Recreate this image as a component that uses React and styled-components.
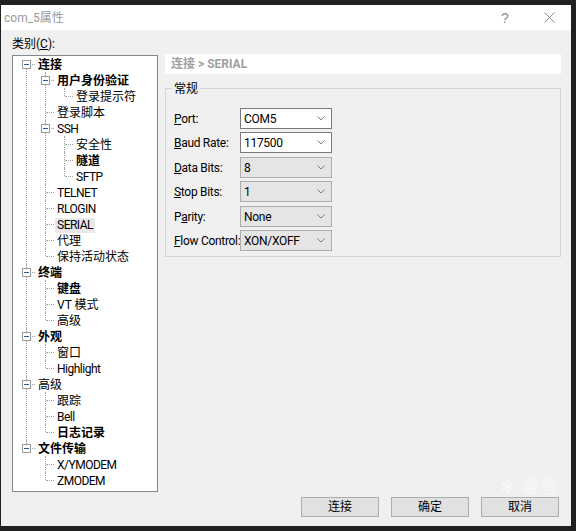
import { Fragment } from "react";
import styled, { createGlobalStyle } from "styled-components";

const GlobalStyle = createGlobalStyle`
  html, body {
    margin: 0;
    padding: 0;
    background: #202020;
  }
  body {
    font-family: Roboto, "Noto Sans CJK SC", "Microsoft YaHei", sans-serif;
    font-size: 12px;
    color: #000;
  }
`;

const tree = [
  {
    label: "连接",
    bold: true,
    children: [
      { label: "用户身份验证", bold: true, children: [{ label: "登录提示符" }] },
      { label: "登录脚本" },
      {
        label: "SSH",
        children: [{ label: "安全性" }, { label: "隧道", bold: true }, { label: "SFTP" }],
      },
      { label: "TELNET" },
      { label: "RLOGIN" },
      { label: "SERIAL", selected: true },
      { label: "代理" },
      { label: "保持活动状态" },
    ],
  },
  {
    label: "终端",
    bold: true,
    children: [{ label: "键盘", bold: true }, { label: "VT 模式" }, { label: "高级" }],
  },
  { label: "外观", bold: true, children: [{ label: "窗口" }, { label: "Highlight" }] },
  {
    label: "高级",
    children: [{ label: "跟踪" }, { label: "Bell" }, { label: "日志记录", bold: true }],
  },
  {
    label: "文件传输",
    bold: true,
    children: [{ label: "X/YMODEM" }, { label: "ZMODEM" }],
  },
];

const fields = [
  { key: "P", rest: "ort:", value: "COM5", editable: true },
  { key: "B", rest: "aud Rate:", value: "117500", editable: true },
  { key: "D", rest: "ata Bits:", value: "8" },
  { key: "S", rest: "top Bits:", value: "1" },
  { pre: "P", key: "a", rest: "rity:", value: "None" },
  { key: "F", rest: "low Control:", value: "XON/XOFF" },
];

const isLatin = (text) => /^[\x20-\x7e]+$/.test(text);

const Window = styled.div`
  position: relative;
  display: flex;
  flex-direction: column;
  width: 570px;
  height: 521px;
  margin: 5px 0 0 1px;
  background: #f0f0f0;
`;

const TitleBar = styled.div`
  display: flex;
  align-items: center;
  height: 25px;
  padding: 0 16px 0 3px;
  background: #fff;
  color: #9a9a9a;
  font-size: 12px;
`;

const Title = styled.span`
  flex: 1;
  padding-top: 2px;
  line-height: 23px;
`;

const HelpButton = styled.span`
  width: 14px;
  margin-right: 32px;
  color: #8c8c8c;
  font-family: "Liberation Sans", sans-serif;
  font-size: 14px;
  text-align: center;
`;

const Body = styled.div`
  display: flex;
  gap: 7px;
  padding: 0 0 0 11px;
`;

const LeftColumn = styled.div`
  display: flex;
  flex-direction: column;
`;

const CategoryLabel = styled.div`
  height: 25px;
  padding-top: 3px;
  box-sizing: border-box;
  line-height: 22px;
  u {
    text-decoration: underline;
  }
`;

const TreeBox = styled.div`
  width: 146px;
  height: 437px;
  box-sizing: border-box;
  border: 1px solid #828790;
  background: #fff;
  overflow: hidden;
`;

const TreeList = styled.ul`
  margin: 0;
  padding: 0;
  list-style: none;
`;

const TreeItem = styled.li`
  position: relative;

  &::before {
    content: "";
    position: absolute;
    left: ${(p) => 13 + 19 * p.$level}px;
    top: ${(p) => (p.$first ? 8 : 0)}px;
    height: ${(p) =>
      p.$last ? (p.$first ? "0px" : "8px") : p.$first ? "calc(100% - 8px)" : "100%"};
    border-left: 1px dotted #a0a0a0;
  }
`;

const TreeRow = styled.div`
  position: relative;
  display: flex;
  align-items: center;
  height: 16px;
  padding-left: ${(p) => 23 + 19 * p.$level}px;

  &::before {
    content: "";
    position: absolute;
    left: ${(p) => 14 + 19 * p.$level}px;
    top: 8px;
    width: 8px;
    border-top: 1px dotted #a0a0a0;
  }
`;

const Expander = styled.span`
  position: absolute;
  z-index: 1;
  left: ${(p) => 9 + 19 * p.$level}px;
  top: 4px;
  width: 9px;
  height: 9px;
  box-sizing: border-box;
  border: 1px solid #9a9a9a;
  background: #fff;

  &::after {
    content: "";
    position: absolute;
    left: 1px;
    top: 3px;
    width: 5px;
    height: 1px;
    background: #2b55a8;
  }
`;

const TreeLabel = styled.span`
  position: relative;
  z-index: 1;
  margin-top: 2px;
  padding: 0 2px;
  line-height: 15px;
  font-weight: ${(p) => (p.$bold ? 700 : 400)};
  letter-spacing: ${(p) => (p.$latin ? "-0.5px" : "0")};
  background: ${(p) => (p.$selected ? "#e8e8e8" : "transparent")};
  white-space: nowrap;
`;

const RightColumn = styled.div`
  display: flex;
  flex-direction: column;
  padding-top: 24px;
`;

const Breadcrumb = styled.div`
  width: 396px;
  height: 20px;
  padding: 1px 0 0 6px;
  box-sizing: border-box;
  background: #fff;
  color: #a0a0a0;
  font-weight: 700;
  line-height: 19px;
`;

const GroupBox = styled.div`
  position: relative;
  width: 396px;
  height: 169px;
  margin-top: 14px;
  box-sizing: border-box;
  border: 1px solid #d5d5d5;
  padding: 19px 0 0 8px;
`;

const GroupTitle = styled.span`
  position: absolute;
  left: 6px;
  top: -8px;
  padding: 0 2px;
  background: #f0f0f0;
  line-height: 16px;
`;

const FormGrid = styled.div`
  display: grid;
  grid-template-columns: 66px 92px;
  grid-auto-rows: 21px;
  row-gap: 3.4px;
  align-items: center;
  letter-spacing: -0.3px;
`;

const FieldLabel = styled.label`
  padding-top: 2px;
  line-height: 19px;
  white-space: nowrap;
  u {
    text-decoration: underline;
  }
`;

const Combo = styled.div`
  display: flex;
  align-items: center;
  height: 21px;
  box-sizing: border-box;
  padding: 0 6px 0 3px;
  border: 1px solid ${(p) => (p.$editable ? "#7a7a7a" : "#adadad")};
  background: ${(p) => (p.$editable ? "#fff" : "#e5e5e5")};
`;

const ComboValue = styled.span`
  flex: 1;
  padding-top: 1px;
  line-height: 18px;
`;

const Footer = styled.div`
  display: flex;
  justify-content: flex-end;
  gap: 12px;
  margin-top: 5px;
  padding-right: 12px;
`;

const Button = styled.button`
  width: 78px;
  height: 20px;
  padding: 1px 0 0;
  border: 1px solid #adadad;
  background: #e1e1e1;
  color: #000;
  font-family: inherit;
  font-size: 12px;
  line-height: 17px;
`;

const Watermark = styled.span`
  position: absolute;
  right: 12px;
  bottom: 30px;
  color: rgba(255, 255, 255, 0.5);
  font-size: 18px;
  line-height: 18px;
  letter-spacing: 1px;
  pointer-events: none;
`;

const Chevron = () => (
  <svg width="8" height="5" viewBox="0 0 8 5">
    <polyline points="0.5,0.5 4,4 7.5,0.5" fill="none" stroke="#7a7a7a" strokeWidth="1" />
  </svg>
);

const CloseIcon = () => (
  <svg width="11" height="11" viewBox="0 0 11 11">
    <path d="M0.5 0.5 L10.5 10.5 M10.5 0.5 L0.5 10.5" stroke="#8c8c8c" strokeWidth="1" />
  </svg>
);

const TreeNode = ({ node, level, first, last }) => (
  <TreeItem $level={level} $first={first} $last={last}>
    <TreeRow $level={level}>
      {node.children && <Expander $level={level} />}
      <TreeLabel $bold={node.bold} $selected={node.selected} $latin={isLatin(node.label)}>
        {node.label}
      </TreeLabel>
    </TreeRow>
    {node.children && (
      <TreeList>
        {node.children.map((child, i) => (
          <TreeNode
            key={child.label + i}
            node={child}
            level={level + 1}
            first={false}
            last={i === node.children.length - 1}
          />
        ))}
      </TreeList>
    )}
  </TreeItem>
);

const App = () => {
  return (
    <>
      <GlobalStyle />
      <Window>
        <TitleBar>
          <Title>com_5属性</Title>
          <HelpButton>?</HelpButton>
          <CloseIcon />
        </TitleBar>
        <Body>
          <LeftColumn>
            <CategoryLabel>
              类别(<u>C</u>):
            </CategoryLabel>
            <TreeBox>
              <TreeList>
                {tree.map((node, i) => (
                  <TreeNode
                    key={node.label + i}
                    node={node}
                    level={0}
                    first={i === 0}
                    last={i === tree.length - 1}
                  />
                ))}
              </TreeList>
            </TreeBox>
          </LeftColumn>
          <RightColumn>
            <Breadcrumb>连接 &gt; SERIAL</Breadcrumb>
            <GroupBox>
              <GroupTitle>常规</GroupTitle>
              <FormGrid>
                {fields.map((f) => (
                  <Fragment key={f.rest}>
                    <FieldLabel>
                      {f.pre}
                      <u>{f.key}</u>
                      {f.rest}
                    </FieldLabel>
                    <Combo $editable={f.editable}>
                      <ComboValue>{f.value}</ComboValue>
                      <Chevron />
                    </Combo>
                  </Fragment>
                ))}
              </FormGrid>
            </GroupBox>
          </RightColumn>
        </Body>
        <Footer>
          <Button>连接</Button>
          <Button>确定</Button>
          <Button>取消</Button>
        </Footer>
        <Watermark>✻ 看雪</Watermark>
      </Window>
    </>
  );
};

export default App;
